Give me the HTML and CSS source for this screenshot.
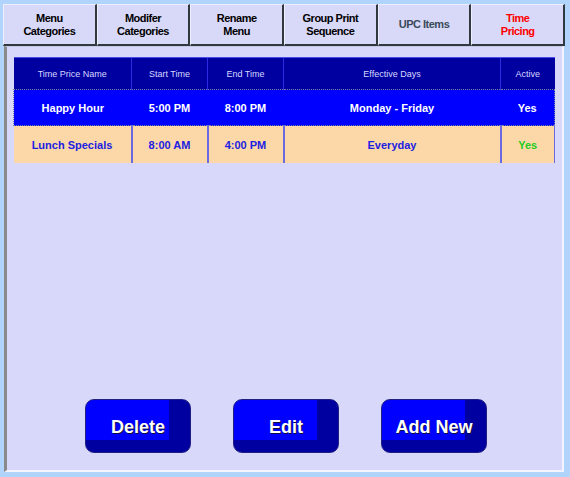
FILE: index.html
```html
<!DOCTYPE html>
<html>
<head>
<meta charset="utf-8">
<link rel="stylesheet" href="styles.css">
</head>
<body>
<div class="screen">
  <div class="tabs">
    <div class="tab">Menu<br>Categories</div>
    <div class="tab">Modifer<br>Categories</div>
    <div class="tab">Rename<br>Menu</div>
    <div class="tab">Group Print<br>Sequence</div>
    <div class="tab tab-muted">UPC Items</div>
    <div class="tab tab-active">Time<br>Pricing</div>
  </div>
  <div class="panel">
    <table class="grid">
      <colgroup>
        <col class="c1"><col class="c2"><col class="c3"><col class="c4"><col class="c5">
      </colgroup>
      <thead>
        <tr>
          <th>Time Price Name</th>
          <th>Start Time</th>
          <th>End Time</th>
          <th>Effective Days</th>
          <th>Active</th>
        </tr>
      </thead>
      <tbody>
        <tr class="row-selected">
          <td>Happy Hour</td>
          <td>5:00 PM</td>
          <td>8:00 PM</td>
          <td>Monday - Friday</td>
          <td>Yes</td>
        </tr>
        <tr class="row-normal">
          <td>Lunch Specials</td>
          <td>8:00 AM</td>
          <td>4:00 PM</td>
          <td>Everyday</td>
          <td class="yes">Yes</td>
        </tr>
      </tbody>
    </table>
    <div class="actions">
      <button class="btn">Delete</button>
      <button class="btn">Edit</button>
      <button class="btn">Add New</button>
    </div>
  </div>
</div>
</body>
</html>
```
FILE: styles.css
```css
html, body {
  margin: 0;
  padding: 0;
}
body {
  width: 570px;
  height: 477px;
  background: #b0d4fc;
  font-family: "Liberation Sans", Arial, sans-serif;
  overflow: hidden;
}
.screen {
  padding: 4px 5px 5px 3px;
  box-sizing: border-box;
  height: 477px;
  display: flex;
  flex-direction: column;
}
.tabs {
  display: flex;
  height: 42px;
  flex: none;
}
.tab {
  flex: 1;
  box-sizing: border-box;
  background: #d8d8f8;
  border-top: 1px solid #eeeeff;
  border-left: 1px solid #eeeeff;
  border-right: 2px solid #303840;
  border-bottom: 2px solid #303840;
  display: flex;
  align-items: center;
  justify-content: center;
  text-align: center;
  font-size: 11px;
  font-weight: bold;
  line-height: 13px;
  letter-spacing: -0.5px;
  color: #000;
}
.tab-muted {
  color: #3a4a5a;
}
.tab-active {
  color: #ff0000;
}
.panel {
  flex: 1;
  margin-left: 1px;
  margin-right: 1px;
  background: #d8d8fa;
  border-top: 1px solid #c8c8e8;
  border-left: 3px solid #8a8a8a;
  border-right: 2px solid #f4f4ff;
  border-bottom: 2px solid #f4f4ff;
  padding: 10px 7px 17px 6px;
  display: flex;
  flex-direction: column;
}
.grid {
  width: 541px;
  border-collapse: collapse;
  table-layout: fixed;
}
.c1 { width: 118px; }
.c2 { width: 76px; }
.c3 { width: 76px; }
.c4 { width: 217px; }
.c5 { width: 54px; }
.grid th {
  background: #0000a0;
  color: #d8d8ff;
  font-weight: normal;
  font-size: 9px;
  height: 31px;
  padding: 0;
  border-left: 1px solid #2a2ae0;
  border-top: 1px solid #4a4ae8;
}
.grid th:first-child { border-left: none; }
.grid td {
  text-align: center;
  font-weight: bold;
  font-size: 11px;
  padding: 0;
}
.row-selected td {
  background: #0000ff;
  color: #ffffff;
  height: 35px;
  border-top: 1px dotted #8080a0;
  border-bottom: 1px dotted #8080a0;
}
.row-selected td:first-child { border-left: 1px dotted #8080a0; }
.row-selected td:last-child { border-right: 1px dotted #8080a0; }
.row-normal td {
  background: #fcd8a8;
  color: #2020e0;
  height: 37px;
  border-left: 2px solid #6a6ae0;
}
.row-normal td:first-child { border-left: none; }
.row-normal td:last-child { border-right: 1px solid #6a6ae0; }
.row-normal td.yes { color: #22cc22; }
.actions {
  margin-top: auto;
  display: flex;
  justify-content: center;
  gap: 42px;
  padding-left: 4px;
}
.btn {
  width: 106px;
  height: 54px;
  border: 1px solid #202080;
  border-radius: 9px;
  background:
    linear-gradient(to left, #0000a0 21px, transparent 21px),
    linear-gradient(to top, #0000a0 12px, #0000ff 12px);
  color: #ffffff;
  font-family: "Liberation Sans", Arial, sans-serif;
  font-weight: bold;
  font-size: 18px;
  text-shadow: 1px 1px 0 #101040;
  padding: 2px 0 0 0;
  cursor: pointer;
}
```
